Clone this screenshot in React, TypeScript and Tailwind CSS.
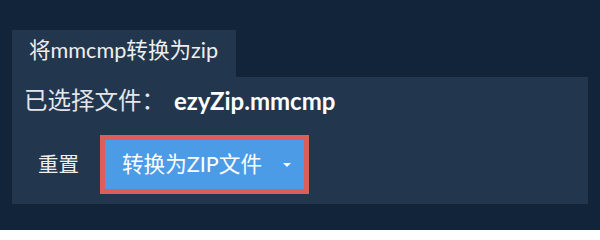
import React from 'react';

const font = { fontFamily: 'Lato, "Noto Sans CJK SC", sans-serif' };

const App: React.FC = () => {
  return (
    <div className="w-[600px] h-[230px] bg-[#11243a] pt-[30px] px-[12px] text-[#eeeeee]" style={font}>
      {/* Tab */}
      <div className="w-[224px] h-[47px] bg-[#22374e] pl-[17px] pt-[4px] text-[21.6px] leading-[32px]">
        将mmcmp转换为zip
      </div>

      {/* Panel */}
      <div className="h-[127px] bg-[#22374e] px-[12px] pt-[8px]">
        <div className="flex items-center h-[32px]">
          <span className="text-[23.5px] text-[#e4e6ea]">已选择文件：</span>
          <span className="font-bold ml-[9px] text-[24px] text-white">ezyZip.mmcmp</span>
        </div>

        <div className="flex items-center mt-[18px]">
          <button className="px-[14px] h-[49px] text-[20.5px] text-[#eeeeee]">重置</button>
          <div className="ml-[7px] flex border-[5px] border-[#dc5e5b]">
            <button className="flex items-center h-[49px] w-[199px] bg-[#4b9be6] pl-[17px] text-[21.6px] text-white">
              <span>转换为ZIP文件</span>
              <span className="ml-auto mr-[13px] w-0 h-0 border-l-[4px] border-r-[4px] border-t-[4px] border-l-transparent border-r-transparent border-t-white" />
            </button>
          </div>
        </div>
      </div>
    </div>
  );
};

export default App;
